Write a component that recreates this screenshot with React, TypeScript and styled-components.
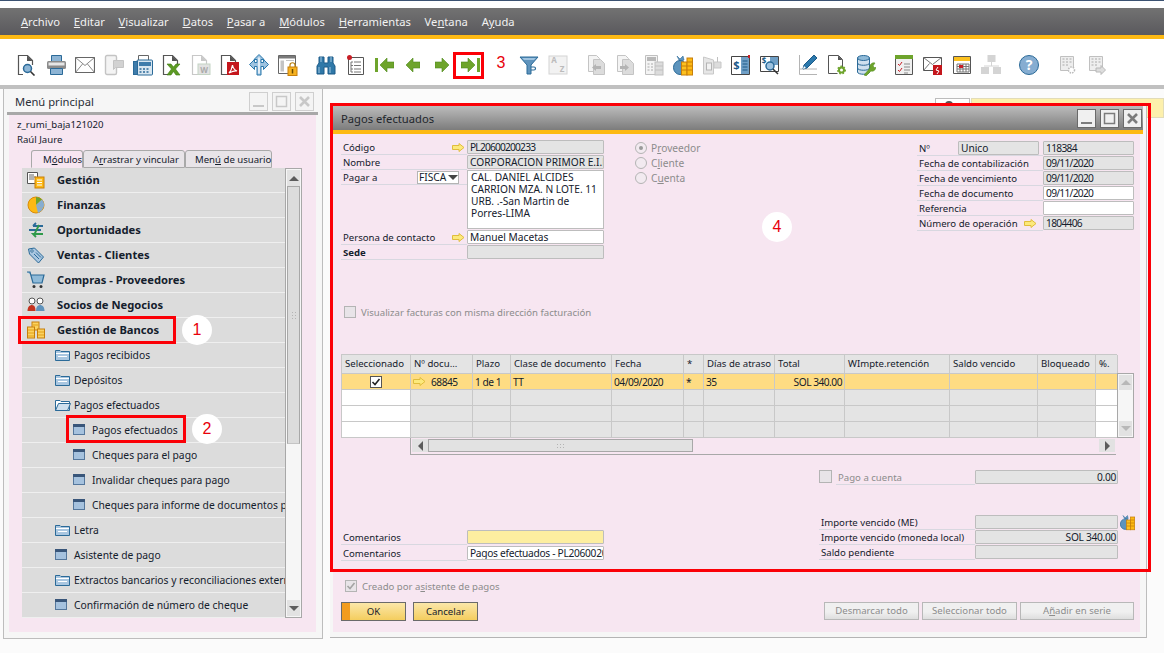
import * as React from "react"
import styled, { createGlobalStyle } from "styled-components"

const fontStack = `"Noto Sans", "DejaVu Sans", "Liberation Sans", sans-serif`

const GlobalStyle = createGlobalStyle`
  html, body { margin: 0; padding: 0; background: #fbfbfb; }
  body { font-family: ${fontStack}; font-size: 9.6px; color: #14202c; }
  * { box-sizing: border-box; }
  svg { display: block; }
`

const Page = styled.div`
  width: 1164px;
  height: 653px;
  display: flex;
  flex-direction: column;
  overflow: hidden;
  position: relative;
  background: #fff;
  border-top: 1px solid #3b5272;
`

const TopGap = styled.div`
  height: 7px;
  background: #fff;
`

const MenuBar = styled.div`
  height: 31px;
  padding-left: 14px;
  display: flex;
  align-items: center;
  background: linear-gradient(#727272, #5a595d);
  border-bottom: 4px solid #fdb913;
`

const MenuItem = styled.span`
  padding: 0 6.900px;
  color: #f2f2f2;
  font-size: 11.2px;
`

const Toolbar = styled.div`
  height: 46px;
  padding: 6px 0 0 12px;
  display: flex;
  gap: 9px;
  align-items: center;
  background: #fff;
`

const ToolGroup = styled.div`
  display: flex;
`

const ToolSlot = styled.div`
  width: 29px;
  height: 24px;
  display: flex;
  align-items: center;
  justify-content: center;
`

const ToolRule = styled.div`
  height: 4px;
  background: #c0c0c0;
`

const Desktop = styled.div`
  flex: 1;
  position: relative;
  background: #fbfbfb;
`

const Notice = styled.div`
  position: absolute;
  left: 971px;
  top: 9px;
  width: 193px;
  height: 20px;
  background: #fdf0ac;
  border: 1px solid #e2dcb8;
`

const NoticeTab = styled.div`
  position: absolute;
  left: 935px;
  top: 9px;
  width: 35px;
  height: 20px;
  padding: 2px 0 0 8px;
  background: #fff;
  border: 1px solid #bcbcbc;
`

const MainWindow = styled.section`
  position: absolute;
  left: 3px;
  top: 0;
  width: 320px;
  height: 550px;
  padding: 0 6px 6px 5px;
  display: flex;
  flex-direction: column;
  background: #f6f6f6;
  border: 1px solid #bdbdbd;
  border-top: 0;
`

const MainTitle = styled.div`
  height: 26px;
  margin: 0 -2px;
  padding: 2px 4px 0 8px;
  display: flex;
  align-items: center;
  justify-content: space-between;
  font-size: 11.200px;
  color: #2a2f38;
  border-bottom: 3px solid #a8a8a8;
`

const WindowButtons = styled.div`
  display: flex;
  gap: 4px;
`

const WindowButton = styled.div<{ $faded?: boolean }>`
  width: 19px;
  height: 19px;
  display: flex;
  align-items: center;
  justify-content: center;
  background: ${(p) => (p.$faded ? "#f4f4f4" : "#f0f0f0")};
  border: 1px solid ${(p) => (p.$faded ? "#cfcfcf" : "#6a6a6a")};
`

const MainBody = styled.div`
  flex: 1;
  padding: 2px 0 0 8px;
  display: flex;
  flex-direction: column;
  background: #f7e6f1;
`

const UserLine = styled.div`
  height: 15px;
  line-height: 15px;
`

const TabStrip = styled.div`
  margin: 3px 0 0 14px;
  height: 18px;
  display: flex;
`

const Tab = styled.div<{ $active?: boolean; $width: number }>`
  width: ${(p) => p.$width}px;
  padding-left: ${(p) => (p.$active ? 11 : 9)}px;
  line-height: 17px;
  white-space: nowrap;
  border: 1px solid #a9a9a9;
  border-radius: 3px 3px 0 0;
  background: ${(p) => (p.$active ? "#f7e6f1" : "#e8e4e8")};
  border-bottom-color: ${(p) => (p.$active ? "#f7e6f1" : "#a9a9a9")};
`

const ModuleArea = styled.div`
  margin-left: 5px;
  display: flex;
`

const ModuleList = styled.div`
  width: 263px;
  height: 450px;
  overflow: hidden;
`

const ModuleRow = styled.div<{ $indent: number; $strong?: boolean }>`
  height: 25px;
  padding: 0 0 1px ${(p) => p.$indent}px;
  display: flex;
  align-items: center;
  white-space: nowrap;
  background: #dcdcdc;
  border-bottom: 1px solid #efefef;
  font-weight: ${(p) => (p.$strong ? 700 : 400)};
  font-size: ${(p) => (p.$strong ? "11.200px" : "10.300px")};
`

const ModuleIcon = styled.span<{ $width: number }>`
  width: ${(p) => p.$width}px;
  flex: none;
`

const VerticalBar = styled.div<{ $height: number; $width: number }>`
  width: ${(p) => p.$width}px;
  height: ${(p) => p.$height}px;
  padding: 1px;
  display: flex;
  flex-direction: column;
  justify-content: space-between;
  flex: none;
  background: #f6f6f6;
  border: 1px solid #a8a8a8;
`

const ScrollTop = styled.div`
  display: flex;
  flex-direction: column;
`

const ScrollButton = styled.div<{ $height: number; $muted?: boolean }>`
  height: ${(p) => p.$height}px;
  flex: none;
  display: flex;
  align-items: center;
  justify-content: center;
  background: #e2e2e2;
  color: ${(p) => (p.$muted ? "#b8b8b8" : "#5c5c5c")};
`

const ScrollThumb = styled.div<{ $height: number }>`
  height: ${(p) => p.$height}px;
  flex: none;
  display: flex;
  align-items: center;
  justify-content: center;
  background: #dcdcdc;
  border: 1px solid #a8a8a8;
  border-bottom-color: #c4c4c4;
`

const FormWindow = styled.section`
  position: absolute;
  left: 330px;
  top: 15px;
  width: 817px;
  height: 534px;
  padding: 2px 6px 5px 3px;
  display: flex;
  flex-direction: column;
  background: #f6f6f6;
  border-right: 1px solid #bdbdbd;
  border-bottom: 1px solid #b4b4b4;
`

const FormTitle = styled.div`
  height: 28px;
  flex: none;
  padding: 0 1px 0 8px;
  margin-right: -3px;
  display: flex;
  align-items: center;
  justify-content: space-between;
  font-size: 11.200px;
  color: #22262c;
  background: linear-gradient(#bcbcbc, #7c7c7c);
  border-bottom: 4px solid #fdb913;
`

const FormBody = styled.div`
  flex: 1;
  padding: 6px 0 0 8px;
  display: flex;
  flex-direction: column;
  background: #f7e6f1;
`

const HeaderGrid = styled.div`
  height: 214px;
  display: grid;
  grid-template-columns: 263px 31px 282px 217px;
  grid-template-rows: 160px 54px;
`

const FieldStack = styled.div`
  display: flex;
  flex-direction: column;
`

const RadioStack = styled.div`
  grid-column: 3;
  display: flex;
  flex-direction: column;
`

const RightStack = styled.div`
  grid-column: 4;
  padding-top: 1px;
  display: flex;
  flex-direction: column;
`

const FieldRow = styled.div<{ $label: number; $value: number }>`
  height: 15px;
  display: grid;
  grid-template-columns: ${(p) => p.$label}px ${(p) => p.$value}px;
  flex: none;
`

const FieldLabel = styled.div<{ $strong?: boolean; $faded?: boolean }>`
  height: 15px;
  padding: 1px 2px 0;
  display: flex;
  align-items: center;
  justify-content: space-between;
  white-space: nowrap;
  border-bottom: 1px solid #d8d8e0;
  font-weight: ${(p) => (p.$strong ? 700 : 400)};
  color: ${(p) => (p.$faded ? "#8c8c8c" : "inherit")};
`

const FieldValue = styled.div<{ $tone?: "locked" | "open" | "note"; $right?: boolean; $squeeze?: number }>`
  height: 14px;
  padding: 0 1px 0 2px;
  line-height: 13px;
  font-size: 10.200px;
  letter-spacing: ${(p) => p.$squeeze ?? 0}px;
  overflow: hidden;
  white-space: nowrap;
  text-align: ${(p) => (p.$right ? "right" : "left")};
  background: ${(p) => (p.$tone === "open" ? "#fff" : p.$tone === "note" ? "#fdeea0" : "#e4e4e4")};
  border: 1px solid #bdbdbd;
  border-radius: 1px;
`

const PickBox = styled.div`
  width: 42px;
  height: 13px;
  margin-right: 6px;
  padding-left: 1px;
  display: flex;
  align-items: center;
  justify-content: space-between;
  overflow: hidden;
  background: #fff;
  border: 1px solid #b4b4b4;
  line-height: 11px;
  font-size: 10.200px;
`

const AddressRow = styled.div`
  height: 60px;
  display: grid;
  grid-template-columns: 126px 137px;
  align-items: start;
  flex: none;
`

const AddressBox = styled.div`
  height: 59px;
  padding: 0 3px;
  line-height: 12px;
  font-size: 10.200px;
  background: #fff;
  border: 1px solid #bdbdbd;
`

const RadioLine = styled.div`
  height: 15px;
  display: flex;
  align-items: center;
  gap: 4px;
  font-size: 10.200px;
  color: #8c8c8c;
`

const RadioDot = styled.span<{ $on?: boolean }>`
  width: 12px;
  height: 12px;
  display: flex;
  align-items: center;
  justify-content: center;
  border-radius: 50%;
  background: #f2eaf0;
  border: 1px solid #b4b4b4;

  &::after {
    content: "";
    width: 4px;
    height: 4px;
    border-radius: 50%;
    background: ${(p) => (p.$on ? "#9a9a9a" : "transparent")};
  }
`

const CheckLine = styled.div<{ $gap: number }>`
  display: flex;
  align-items: center;
  gap: ${(p) => p.$gap}px;
  color: #8c8c8c;
  white-space: nowrap;
`

const CheckBox = styled.span<{ $live?: boolean; $size: number }>`
  width: ${(p) => p.$size}px;
  height: ${(p) => p.$size}px;
  flex: none;
  display: flex;
  align-items: center;
  justify-content: center;
  background: ${(p) => (p.$live ? "#fff" : "#e8e4e8")};
  border: 1px solid ${(p) => (p.$live ? "#555" : "#b4b4b4")};
`

const VisualizarLine = styled(CheckLine)`
  grid-column: 1 / span 4;
  padding-left: 3px;
  align-self: start;
  height: 12px;
  margin-top: 6px;
`

const TableArea = styled.div`
  display: flex;
`

const Table = styled.div`
  width: 776px;
  display: grid;
  grid-template-columns: 69px 62px 38px 101px 72px 20px 71px 70px 105px 88px 58px 22px;
  grid-template-rows: 19px repeat(4, 16px);
  flex: none;
  border-left: 1px solid #c8c8c8;
  border-top: 1px solid #c8c8c8;
`

const HeadCell = styled.div`
  padding: 0 3px;
  line-height: 17px;
  white-space: nowrap;
  overflow: hidden;
  background: #e4e4e4;
  border-right: 1px solid #c8c8c8;
  border-bottom: 1px solid #c8c8c8;
`

const BodyCell = styled.div<{ $tone: "pick" | "free" | "idle"; $align?: string }>`
  padding: 0 2px;
  display: flex;
  align-items: center;
  gap: 5px;
  justify-content: ${(p) => p.$align ?? "flex-start"};
  font-size: 10.200px;
  letter-spacing: -0.500px;
  white-space: nowrap;
  overflow: hidden;
  background: ${(p) => (p.$tone === "pick" ? "#fedc83" : p.$tone === "free" ? "#fff" : "#e4e4e4")};
  border-right: 1px solid #c8c8c8;
  border-bottom: 1px solid #c8c8c8;
`

const TableVertical = styled.div`
  margin-top: 19px;
`

const HorizontalBar = styled.div`
  width: 706px;
  height: 17px;
  margin-left: 69px;
  padding: 1px 1px 2px 1px;
  display: flex;
  justify-content: space-between;
  border-left: 1px solid #a8a8a8;
  border-bottom: 1px solid #a8a8a8;
`

const SideButton = styled.div`
  width: 16px;
  display: flex;
  align-items: center;
  justify-content: center;
  background: #e2e2e2;
`

const SideThumb = styled.div`
  width: 265px;
  margin-right: auto;
  display: flex;
  align-items: center;
  justify-content: center;
  background: #e2e2e2;
  border: 1px solid #a8a8a8;
`

const LowerArea = styled.div`
  height: 106px;
  display: grid;
  grid-template-columns: 478px 315px;
  align-items: end;
`

const RightLower = styled.div`
  padding-bottom: 1px;
  display: flex;
  flex-direction: column;
`

const PayLine = styled.div`
  height: 15px;
  margin-bottom: 30px;
  display: grid;
  grid-template-columns: 17px 139px 143px;
  align-items: start;
`

const ImportRow = styled.div`
  height: 15px;
  display: grid;
  grid-template-columns: 156px 143px auto;
`

const CoinSlot = styled.div`
  margin: -1px 0 0 2px;
`

const CommentsStack = styled.div`
  display: flex;
  flex-direction: column;
  gap: 1px;
`

const FootCheck = styled(CheckLine)`
  margin: 19px 0 0 4px;
  height: 12px;
`

const ButtonRow = styled.div`
  margin-top: 10px;
  width: 793px;
  display: flex;
  gap: 3px;
`

const PrimaryButton = styled.div<{ $lead?: boolean }>`
  width: 65px;
  height: 19px;
  margin-right: 4px;
  line-height: 17px;
  text-align: center;
  border: 1px solid #6a6a6a;
  background: ${(p) =>
    p.$lead
      ? "linear-gradient(90deg, #f39c1f 8px, transparent 8px), linear-gradient(#fbe7a9, #f4cd5e)"
      : "linear-gradient(#fbe7a9, #f4cd5e)"};
`

const MutedButton = styled.div<{ $width: number; $first?: boolean }>`
  width: ${(p) => p.$width}px;
  height: 18px;
  margin-left: ${(p) => (p.$first ? "auto" : "0")};
  line-height: 16px;
  text-align: center;
  color: #8c8c8c;
  background: linear-gradient(#f0f0f0 55%, #dedede);
  border: 1px solid #b8b8b8;
`

const ArrowSlot = styled.span`
  margin-right: 4px;
`

const UnicoBox = styled(FieldValue)`
  width: 81px;
  margin: -1px 2px 0 0;
`

const RedFrame = styled.div<{ $x: number; $y: number; $w: number; $h: number }>`
  position: absolute;
  left: ${(p) => p.$x}px;
  top: ${(p) => p.$y}px;
  width: ${(p) => p.$w}px;
  height: ${(p) => p.$h}px;
  border: 3px solid #fb0007;
  pointer-events: none;
`

const StepBadge = styled.div<{ $x: number; $y: number }>`
  position: absolute;
  left: ${(p) => p.$x - 15}px;
  top: ${(p) => p.$y - 15}px;
  width: 30px;
  height: 30px;
  display: flex;
  align-items: center;
  justify-content: center;
  border-radius: 50%;
  background: #fff;
  color: #e8000a;
  font-family: "Liberation Sans", sans-serif;
  font-size: 16px;
`

/* ---- drawings ---- */

const Ico = ({ w = 20, h = 22, children }: { w?: number; h?: number; children: React.ReactNode }) => (
  <svg width={w} height={h} viewBox={`0 0 ${w} ${h}`}>{children}</svg>
)

const GreyDoc = ({ flip }: { flip?: boolean }) => (
  <Ico>
    <path d="M2.500 1.500h8l3 3v13h-11z" fill="#f4f4f4" stroke="#c4c4c4" />
    <path d="M7.500 5.500h7l4 4v11h-11z" fill="#dcdcdc" stroke="#c4c4c4" />
    <path d={flip ? "M5 12h5v-2l4 3.500-4 3.500v-2h-5z" : "M15 12h-5v-2l-4 3.500 4 3.500v-2h5z"} fill="#b4b4b4" />
  </Ico>
)

const GreenArrow = ({ left, x = 0 }: { left?: boolean; x?: number }) => (
  <g transform={`translate(${x} 4)`}>
    <path
      d={left ? "M0 7l7-7v4h7v6h-7v4z" : "M14 7l-7-7v4h-7v6h7v4z"}
      fill="#6ea42c"
      stroke="#4f8a1e"
      strokeWidth=".6"
    />
  </g>
)

const CoinBag = ({ scale = 1 }: { scale?: number }) => (
  <svg width={20 * scale} height={22 * scale} viewBox="0 0 20 22">
    <path d="M4 2l3 3 3-3 1 4c-1 1-4 1-5 0z" fill="#5d94bd" stroke="#2b6a98" strokeWidth=".6" />
    <ellipse cx="7" cy="13.500" rx="6.500" ry="7" fill="#5d94bd" stroke="#2b6a98" />
    <rect x="8.500" y="8" width="5.500" height="13" fill="#fcc11f" stroke="#c77f0a" />
    <rect x="14" y="4" width="5.500" height="17" fill="#fdb913" stroke="#c77f0a" />
    <path d="M9 12h5M9 16h5M14 8h5M14 12h5M14 16h5" stroke="#c77f0a" />
  </svg>
)

const GridSheet = () => (
  <g>
    <path d="M3.500 2.500h13v14h-13z" fill="#eee" stroke="#c0c0c0" />
    <path d="M5.500 5h2M9 5h2M12.500 5h2M5.500 8h2M9 8h2M12.500 8h2M5.500 11h2M9 11h2" stroke="#aaa" />
  </g>
)

const toolGroups: React.ReactNode[][] = [
  [
    <Ico key="preview"><path d="M6 20.500H1.500v-19h9l5 5V11" fill="#fff" stroke="#555" strokeWidth="1.200" /><path d="M10 1.500v5.500h5.500z" fill="#555" /><circle cx="10.500" cy="14.500" r="4" fill="#8eb6d6" stroke="#2b6a98" strokeWidth="1.500" /><path d="M13.500 17.500l4 4" stroke="#333" strokeWidth="1.600" /></Ico>,
    <Ico key="print"><path d="M5.500 1.500h10v6h-10z" fill="#8db4d4" stroke="#2b6a98" /><rect x="1" y="7" width="19" height="8" rx="1.500" fill="#8b8b8b" /><rect x="2.500" y="8.500" width="16" height="3" fill="#e6e6e6" /><path d="M4.500 14.500h12v6h-12z" fill="#8db4d4" stroke="#2b6a98" /></Ico>,
    <Ico key="mail"><path d="M.5 3.500h19v15h-19z" fill="#fff" stroke="#666" strokeWidth="1.200" /><path d="M.5 3.500l9.500 8 9.500-8M.5 18.500l7-8.500M19.500 18.500l-7-8.500" fill="none" stroke="#888" /></Ico>,
    <Ico key="phone"><rect x="1.500" y="1.500" width="11" height="19" rx="1.500" fill="#f4f4f4" stroke="#c4c4c4" strokeWidth="1.400" /><path d="M9.500 6.500h10v7h-8l-2 2z" fill="#d2d2d2" stroke="#c4c4c4" /></Ico>,
    <Ico key="fax"><path d="M5.500 1.500h10v5h-10z" fill="#fff" stroke="#666" /><rect x="4" y="6" width="15.500" height="15" rx="1" fill="#d8e6f0" stroke="#2b6a98" /><rect x="0.500" y="7.500" width="4" height="13" fill="#3f7cab" stroke="#2b6a98" /><rect x="6" y="8" width="12" height="4" fill="#3f7cab" /><path d="M6.500 15h2M10 15h2M13.500 15h2M6.500 18h2M10 18h2M13.500 18h2" stroke="#2b6a98" strokeWidth="1.400" /></Ico>,
    <Ico key="excel"><path d="M7 20.500H1.500v-19h9l5 5V10" fill="#fff" stroke="#555" strokeWidth="1.200" /><path d="M10 1.500v5.500h5.500z" fill="#555" /><path d="M5 10h4l2.500 3 2.500-3h4l-4.500 5 4.500 6h-4l-2.500-3.500-2.500 3.500H5l4.500-6z" fill="#5c9a23" stroke="#3d7a12" strokeWidth=".6" /></Ico>,
    <Ico key="word"><path d="M7 20.500H1.500v-19h9l5 5V10" fill="#fff" stroke="#c8c8c8" strokeWidth="1.200" /><path d="M10 1.500v5.500h5.500z" fill="#c8c8c8" /><rect x="7" y="10" width="12" height="10.500" fill="#e2e2e2" stroke="#c4d4c4" /><text x="13" y="18.500" fontSize="8" fontWeight="700" textAnchor="middle" fill="#aaa">W</text></Ico>,
    <Ico key="pdf"><path d="M7 20.500H1.500v-19h9l5 5V10" fill="#fff" stroke="#555" strokeWidth="1.200" /><path d="M10 1.500v5.500h5.500z" fill="#555" /><rect x="7" y="8" width="12" height="13" fill="#c4161c" /><path d="M9 19c2-2 3-5 3.500-8 .5 3 2 5 4.500 6-3-.5-5 .5-8 2z" fill="none" stroke="#fff" strokeWidth="1.200" /></Ico>,
    <Ico key="arrows"><path d="M10 .5l5 5h-3v3h2.500V5.500l5 5-5 5v-3H12v8.500H8V12.500H5.500v3l-5-5 5-5v3H8v-3H5z" fill="#9ec3e0" stroke="#2b78ac" /><path d="M10 3.500v16" stroke="#fff" strokeWidth="1.400" /></Ico>,
    <Ico key="lock"><path d="M.5 1.500h17v18H.5z" fill="#fff" stroke="#666" /><path d="M1 2h16v2.500H1z" fill="#7a7a7a" /><path d="M2.500 6.500h3.500v11H2.500z" fill="#c4c4c4" /><path d="M8 6.500h8" stroke="#c4c4c4" /><rect x="10" y="13" width="9" height="8.500" fill="#f6b220" stroke="#c77f0a" /><path d="M12 13v-2c0-3 5-3 5 0v2" fill="none" stroke="#b98010" strokeWidth="1.200" /><path d="M14.500 15v4.500" stroke="#6a4a00" strokeWidth="1.500" /></Ico>,
  ],
  [
    <Ico key="bino"><path d="M3 3h5v6h4V3h5v6l2 3v8h-7v-7H8v7H1v-8l2-3z" fill="#2f78a8" stroke="#1c5a88" /><path d="M5 3v5M15 3v5M3 13v6M14 13v6" stroke="#8fbad8" strokeWidth="1.200" /></Ico>,
    <Ico key="listdoc" w={18}><path d="M2.500 3.500h15v17h-15z" fill="#fff" stroke="#555" /><circle cx="3.500" cy="3.500" r="2.500" fill="#c81e26" /><path d="M5 8v10M5 8h2M5 11.500h2M5 15h2M5 18h2M8 8h7M8 11.500h7M8 15h7M8 18h7" stroke="#777" /></Ico>,
    <Ico key="first"><rect x="1" y="4" width="3" height="14" fill="#6ea42c" /><GreenArrow left x={6} /></Ico>,
    <Ico key="prev" w={14}><GreenArrow left x={0} /></Ico>,
    <Ico key="next" w={14}><GreenArrow x={0} /></Ico>,
    <Ico key="last"><GreenArrow x={0} /><rect x="16" y="4" width="3" height="14" fill="#6ea42c" /></Ico>,
    <span key="blank" />,
    <Ico key="filter"><path d="M1 3h18l-7 8v9h-4v-9z" fill="#5f93bc" stroke="#2b6a98" /><path d="M3 4h14l-2 2H5z" fill="#9ec3e0" /><path d="M12 13h3c2 0 2 3 0 3h-3" fill="none" stroke="#2b6a98" strokeWidth="1.200" /></Ico>,
    <Ico key="sort"><rect x="1" y="2" width="18" height="18" fill="#f2f2f2" stroke="#d4d4d4" /><text x="6" y="9" fontSize="8" fontWeight="700" textAnchor="middle" fill="#bbb">A</text><text x="14" y="18" fontSize="8" fontWeight="700" textAnchor="middle" fill="#bbb">Z</text></Ico>,
  ],
  [
    <GreyDoc key="docback" />,
    <GreyDoc key="docfwd" flip />,
    <Ico key="calc"><path d="M1.500 1.500h12v19h-12z" fill="#f4f4f4" stroke="#c0c0c0" /><rect x="3" y="3" width="9" height="4" fill="#b8b8b8" /><path d="M3.500 10h2M7 10h2M3.500 13h2M7 13h2M3.500 16h2M7 16h2" stroke="#aaa" /><rect x="11" y="8" width="8" height="13" fill="#dcdcdc" stroke="#c0c0c0" /><path d="M11 12h8M11 16h8" stroke="#c0c0c0" /></Ico>,
    <CoinBag key="bag" />,
    <Ico key="scale"><path d="M1.500 3l10 3v14h-10z" fill="#e6e6e6" stroke="#c8c8c8" /><rect x="4.500" y="9" width="5" height="7" fill="#f2f2f2" stroke="#b4b4b4" /><path d="M12 8h7v6h-7z" fill="#dcdcdc" stroke="#c8c8c8" /><path d="M15.500 3v5" stroke="#c0c0c0" /></Ico>,
    <Ico key="dollar"><path d="M.5 2.500h18v18H.5z" fill="#fff" stroke="#444" /><rect x="10" y="3" width="8" height="17" fill="#6f9fc6" /><path d="M11.500 7h5M11.500 10h5M11.500 13h5M11.500 16h5" stroke="#1c5a88" /><text x="5.500" y="15" fontSize="11" fontWeight="700" textAnchor="middle" fill="#1c5a88">$</text><rect x="17" y="1" width="2" height="3" fill="#c81e26" /></Ico>,
    <Ico key="dollarzoom"><path d="M.5 2.500h18v15H.5z" fill="#fff" stroke="#444" /><rect x="10" y="3" width="8" height="8" fill="#6f9fc6" /><text x="4" y="10" fontSize="8" fontWeight="700" textAnchor="middle" fill="#1c5a88">$</text><circle cx="10" cy="12" r="4" fill="#9ec3e0" stroke="#2b6a98" strokeWidth="1.500" /><path d="M13 15l5 5" stroke="#333" strokeWidth="1.500" /></Ico>,
  ],
  [
    <Ico key="pencil"><path d="M1.500 1v19.500H19M1.500 15H19" fill="none" stroke="#b4b4b4" /><path d="M5 15l1-4 10-10 3 3-10 10z" fill="#2b78ac" stroke="#1c5a88" /><path d="M5 15l1-3 2 2z" fill="#fff" /></Ico>,
    <Ico key="docgear"><path d="M1.500 1.500h10l4 4v10" fill="#fff" stroke="#555" /><path d="M1.500 1.500v18h9" fill="none" stroke="#555" /><path d="M11 1.500v4.500h4.500z" fill="#555" /><circle cx="14.500" cy="16" r="3.500" fill="#6ea42c" stroke="#6ea42c" strokeWidth="2" strokeDasharray="1.500 1.500" /><circle cx="14.500" cy="16" r="1.500" fill="#fff" /></Ico>,
    <Ico key="dbtool"><path d="M1.500 4v14c0 3 12 3 12 0V4z" fill="#cfe0ee" stroke="#2b6a98" /><ellipse cx="7.500" cy="4" rx="6" ry="2.500" fill="#8fbad8" stroke="#2b6a98" /><path d="M1.500 9c0 3 12 3 12 0M1.500 14c0 3 12 3 12 0" fill="none" stroke="#2b6a98" /><path d="M8 21l6-7c-1-3 2-6 5-5l-2 3 2 2 1-1c0 3-3 5-5 4l-5 5z" fill="#6ea42c" stroke="#4f8a1e" strokeWidth=".5" /></Ico>,
  ],
  [
    <Ico key="tasks"><path d="M1.500 2.500h17v18h-17z" fill="#f0f0f0" stroke="#555" /><rect x="1" y="1" width="18" height="4" fill="#6ea42c" /><path d="M4 10l1.500 1.500L8 8M4 16l1.500 1.500L8 14" fill="none" stroke="#c81e26" /><path d="M10 10h6M10 13h6M10 16h6M10 19h4" stroke="#888" /></Ico>,
    <Ico key="mailred"><path d="M.5 3.500h18v13h-18z" fill="#fff" stroke="#555" /><path d="M.5 3.500l9 7 9-7M.5 16.500l6-7" fill="none" stroke="#777" /><rect x="10" y="11" width="9" height="10" fill="#c4161c" /><path d="M15 13l-2 3 3 1-2 3" fill="none" stroke="#fff" /></Ico>,
    <Ico key="calendar"><path d="M1.500 2.500h17v17h-17z" fill="#fff" stroke="#555" /><rect x="2" y="3" width="16" height="4" fill="#fcc11f" /><path d="M5 10h12v8H5zM8 10v8M11 10v8M14 10v8M5 12.500h12M5 15h12" fill="none" stroke="#777" /><rect x="7" y="11" width="4" height="3" fill="#c81e26" /></Ico>,
    <Ico key="org"><rect x="6.500" y="1" width="8" height="7" fill="#d4d4d4" /><path d="M10.500 8v4M3 12h15" stroke="#d4d4d4" /><rect x="0" y="13" width="8" height="7" fill="#d4d4d4" /><rect x="12" y="13" width="8" height="7" fill="#d4d4d4" /></Ico>,
  ],
  [
    <Ico key="help" w={22}><circle cx="11" cy="11" r="9.500" fill="#86add1" stroke="#2b6a98" /><text x="11" y="16" fontSize="14" fontWeight="700" textAnchor="middle" fill="#fff">?</text></Ico>,
  ],
  [
    <Ico key="sheetgear"><GridSheet /><circle cx="14.500" cy="16" r="3" fill="#fff" stroke="#bbb" strokeWidth="1.500" strokeDasharray="1.500 1" /></Ico>,
    <Ico key="sheetarrow"><GridSheet /><path d="M10 14h5v-2.500l4.500 4.500-4.500 4.500V18h-5z" fill="#ddd" stroke="#b8b8b8" /></Ico>,
  ],
]

const FolderIcon = ({ open }: { open?: boolean }) => (
  <Ico w={16} h={14}>
    <path d="M.5 2.500v10h14v-9H6l-1-1z" fill={open ? "#fff" : "#a9c6e0"} stroke="#2b6a98" />
    {open ? <path d="M.5 12.500l3-7h12l-3 7z" fill="#cfe0ee" stroke="#2b6a98" /> : <path d="M1 5.500h13M3 8.500h9" stroke="#fff" />}
  </Ico>
)

const ScreenIcon = () => (
  <Ico w={12} h={11}>
    <rect x=".5" y=".5" width="11" height="10" fill="#a6c2de" stroke="#55779c" />
    <rect x="0" y="0" width="12" height="3" fill="#39567a" />
  </Ico>
)

const moduleIcons: Record<string, React.ReactNode> = {
  gestion: <Ico w={18} h={18}><path d="M.5 1.500h10v11H.5z" fill="#fff" stroke="#555" /><path d="M2 4h5M2 6h7M2 8h5" stroke="#666" /><rect x="8" y="6" width="9" height="11" fill="#fdb913" stroke="#c77f0a" /><path d="M10 9h5M10 11.500h5M10 14h5" stroke="#fff" /></Ico>,
  finanzas: <Ico w={18} h={18}><circle cx="9" cy="9" r="8" fill="#fdb913" stroke="#d98b08" /><path d="M9 9V1a8 8 0 0 1 6 2.500z" fill="#6ea42c" /><path d="M9 9l6-5.500a8 8 0 0 1 1 9z" fill="#86add1" /><path d="M9 9l7 3.500a8 8 0 0 1-5 4.500z" fill="#86add1" /></Ico>,
  oportunidades: <Ico w={18} h={18}><path d="M16 5H6M6 5l3-3M2 9h12" fill="none" stroke="#2b6a98" strokeWidth="1.800" /><path d="M16 13H6l3 3M7 14l5-10" fill="none" stroke="#2f9a4a" strokeWidth="1.800" /></Ico>,
  ventas: <Ico w={18} h={18}><path d="M1.500 3l6-1 9 9-5 6-9-9z" fill="#a9c6e0" stroke="#2b6a98" /><circle cx="5" cy="5" r="1.200" fill="#fff" stroke="#2b6a98" /><path d="M7 8l5 5M9 6.500l5 5" stroke="#2b6a98" /></Ico>,
  compras: <Ico w={18} h={18}><path d="M0 1h3l3 11h9l2-8H4" fill="#8fbad8" stroke="#2b6a98" strokeWidth="1.200" /><circle cx="7" cy="15.500" r="1.500" fill="#333" /><circle cx="14" cy="15.500" r="1.500" fill="#333" /></Ico>,
  socios: <Ico w={18} h={18}><circle cx="5" cy="5" r="3" fill="#fff" stroke="#555" /><circle cx="13" cy="5" r="3" fill="#fff" stroke="#555" /><path d="M.5 15c0-4 2-6 4.500-6s3.500 2 3.500 6z" fill="#c4331f" /><path d="M9 15c0-4 1.500-6 4-6s4.500 2 4.500 6z" fill="#5f93bc" /></Ico>,
  bancos: <Ico w={18} h={18}><rect x="5" y="1" width="7" height="8" fill="#fbd25f" stroke="#c77f0a" /><rect x=".5" y="6" width="7" height="11" fill="#fbd25f" stroke="#c77f0a" /><rect x="10.500" y="8" width="7" height="9" fill="#fbd25f" stroke="#c77f0a" /><path d="M1 9h6M1 12h6M1 15h6M11 11h6M11 14h6M6 4h5" stroke="#e3a018" /></Ico>,
}

const GripDots = ({ wide }: { wide?: boolean }) => (
  <Ico w={wide ? 9 : 6} h={wide ? 6 : 9}>
    {(wide ? [1, 4, 7] : [1, 4]).flatMap((x) =>
      (wide ? [1, 4] : [1, 4, 7]).map((y) => <rect key={`${x}-${y}`} x={x} y={y} width="1" height="1" fill="#b4b4b4" />),
    )}
  </Ico>
)

const Triangle = ({ dir, c = "currentColor" }: { dir: "up" | "down" | "left" | "right"; c?: string }) => {
  const d = { up: "M0 6l5-5 5 5z", down: "M0 1h10l-5 5z", left: "M7 0v10l-5-5z", right: "M2 0v10l5-5z" }[dir]
  const horizontal = dir === "up" || dir === "down"
  return (
    <Ico w={horizontal ? 10 : 8} h={horizontal ? 7 : 10}>
      <path d={d} fill={c} />
    </Ico>
  )
}

const ArrowLink = () => (
  <Ico w={13} h={9}>
    <path d="M.5 2.500h6.500V.5l5 4-5 4v-2H.500z" fill="#fce97c" stroke="#e0bd3c" />
  </Ico>
)

const WindowGlyph = ({ kind, c }: { kind: "min" | "max" | "close"; c: string }) => (
  <Ico w={13} h={13}>
    {kind === "min" && <path d="M1 11h11" stroke={c} strokeWidth="2" />}
    {kind === "max" && <path d="M1.500 1.500h10v10h-10z" fill="none" stroke={c} strokeWidth="1.500" />}
    {kind === "close" && <path d="M2 2l9 9M11 2l-9 9" stroke={c} strokeWidth="2.600" />}
  </Ico>
)

const Controls = ({ faded }: { faded?: boolean }) => (
  <WindowButtons>
    {(["min", "max", "close"] as const).map((k) => (
      <WindowButton key={k} $faded={faded}>
        <WindowGlyph kind={k} c={faded ? "#c8c8c8" : "#7c7c7c"} />
      </WindowButton>
    ))}
  </WindowButtons>
)

const modules = [
  { label: "Gestión", icon: "gestion" },
  { label: "Finanzas", icon: "finanzas" },
  { label: "Oportunidades", icon: "oportunidades" },
  { label: "Ventas - Clientes", icon: "ventas" },
  { label: "Compras - Proveedores", icon: "compras" },
  { label: "Socios de Negocios", icon: "socios" },
  { label: "Gestión de Bancos", icon: "bancos" },
]

const subItems: { label: string; kind: "folder" | "open" | "screen"; depth: number }[] = [
  { label: "Pagos recibidos", kind: "folder", depth: 1 },
  { label: "Depósitos", kind: "folder", depth: 1 },
  { label: "Pagos efectuados", kind: "open", depth: 1 },
  { label: "Pagos efectuados", kind: "screen", depth: 2 },
  { label: "Cheques para el pago", kind: "screen", depth: 2 },
  { label: "Invalidar cheques para pago", kind: "screen", depth: 2 },
  { label: "Cheques para informe de documentos pagados", kind: "screen", depth: 2 },
  { label: "Letra", kind: "folder", depth: 1 },
  { label: "Asistente de pago", kind: "screen", depth: 1 },
  { label: "Extractos bancarios y reconciliaciones externas", kind: "folder", depth: 1 },
  { label: "Confirmación de número de cheque", kind: "screen", depth: 1 },
]

const columns = ["Seleccionado", "Nº docu...", "Plazo", "Clase de documento", "Fecha", "*", "Días de atraso", "Total", "WImpte.retención", "Saldo vencido", "Bloqueado", "%."]

const Field = ({ label, value, tone, strong, arrow, squeeze }: { label: string; value?: string; tone?: "locked" | "open" | "note"; strong?: boolean; arrow?: boolean; squeeze?: number }) => (
  <FieldRow $label={126} $value={137}>
    <FieldLabel $strong={strong}>
      {label}
      {arrow && <ArrowLink />}
    </FieldLabel>
    <FieldValue $tone={tone} $squeeze={squeeze}>{value}</FieldValue>
  </FieldRow>
)

const DateField = ({ label, value, tone, arrow }: { label: string; value?: string; tone?: "locked" | "open"; arrow?: boolean }) => (
  <FieldRow $label={126} $value={91}>
    <FieldLabel>
      {label}
      {arrow && <ArrowSlot><ArrowLink /></ArrowSlot>}
    </FieldLabel>
    <FieldValue $tone={tone} $squeeze={-0.7}>{value}</FieldValue>
  </FieldRow>
)

const Amount = ({ label, value, coin }: { label: string; value?: string; coin?: boolean }) => (
  <ImportRow>
    <FieldLabel>{label}</FieldLabel>
    <FieldValue $right $squeeze={-0.3}>{value}</FieldValue>
    {coin && (
      <CoinSlot>
        <CoinBag scale={0.75} />
      </CoinSlot>
    )}
  </ImportRow>
)

const CheckMark = ({ c, size }: { c: string; size: number }) => (
  <svg width={size} height={size} viewBox="0 0 10 10">
    <path d="M1.500 5l2.500 2.500L8.500 2" fill="none" stroke={c} strokeWidth="1.600" />
  </svg>
)

export default function App() {
  return (
    <Page>
      <GlobalStyle />
      <TopGap />
      <MenuBar>
        <MenuItem><u>A</u>rchivo</MenuItem>
        <MenuItem><u>E</u>ditar</MenuItem>
        <MenuItem><u>V</u>isualizar</MenuItem>
        <MenuItem><u>D</u>atos</MenuItem>
        <MenuItem><u>P</u>asar a</MenuItem>
        <MenuItem><u>M</u>ódulos</MenuItem>
        <MenuItem><u>H</u>erramientas</MenuItem>
        <MenuItem>Ve<u>n</u>tana</MenuItem>
        <MenuItem>A<u>y</u>uda</MenuItem>
      </MenuBar>
      <Toolbar>
        {toolGroups.map((group, i) => (
          <ToolGroup key={i}>
            {group.map((icon, j) => (
              <ToolSlot key={j}>{icon}</ToolSlot>
            ))}
          </ToolGroup>
        ))}
      </Toolbar>
      <ToolRule />
      <Desktop>
        <NoticeTab>
          <Ico w={10} h={8}><circle cx="5" cy="4" r="4" fill="#555" /></Ico>
        </NoticeTab>
        <Notice />
        <MainWindow>
          <MainTitle>
            Menú principal
            <Controls faded />
          </MainTitle>
          <MainBody>
            <UserLine>z_rumi_baja121020</UserLine>
            <UserLine>Raúl Jaure</UserLine>
            <TabStrip>
              <Tab $active $width={52}>M<u>ó</u>dulos</Tab>
              <Tab $width={102}>A<u>r</u>rastrar y vincular</Tab>
              <Tab $width={87}>Men<u>ú</u> de usuario</Tab>
            </TabStrip>
            <ModuleArea>
              <ModuleList>
                {modules.map((m) => (
                  <ModuleRow key={m.label} $indent={5} $strong>
                    <ModuleIcon $width={30}>{moduleIcons[m.icon]}</ModuleIcon>
                    {m.label}
                  </ModuleRow>
                ))}
                {subItems.map((s, i) => (
                  <ModuleRow key={i} $indent={s.depth === 1 ? 33 : 51}>
                    <ModuleIcon $width={19}>
                      {s.kind === "screen" ? <ScreenIcon /> : <FolderIcon open={s.kind === "open"} />}
                    </ModuleIcon>
                    {s.label}
                  </ModuleRow>
                ))}
              </ModuleList>
              <VerticalBar $height={450} $width={17}>
                <ScrollTop>
                  <ScrollButton $height={16}><Triangle dir="up" /></ScrollButton>
                  <ScrollThumb $height={258}><GripDots /></ScrollThumb>
                </ScrollTop>
                <ScrollButton $height={16}><Triangle dir="down" /></ScrollButton>
              </VerticalBar>
            </ModuleArea>
          </MainBody>
        </MainWindow>

        <FormWindow>
          <FormTitle>
            Pagos efectuados
            <Controls />
          </FormTitle>
          <FormBody>
            <HeaderGrid>
              <FieldStack>
                <Field label="Código" value="PL20600200233" arrow squeeze={-0.8} />
                <Field label="Nombre" value="CORPORACION PRIMOR E.I.R.L." />
                <AddressRow>
                  <FieldLabel>
                    Pagar a
                    <PickBox>FISCA<Triangle dir="down" c="#444" /></PickBox>
                  </FieldLabel>
                  <AddressBox>CAL. DANIEL ALCIDES CARRION MZA. N LOTE. 11 URB. .-San Martin de Porres-LIMA</AddressBox>
                </AddressRow>
                <Field label="Persona de contacto" value="Manuel Macetas" tone="open" arrow />
                <Field label="Sede" strong />
              </FieldStack>
              <RadioStack>
                <RadioLine><RadioDot $on /><span>P<u>r</u>oveedor</span></RadioLine>
                <RadioLine><RadioDot /><span>C<u>l</u>iente</span></RadioLine>
                <RadioLine><RadioDot /><span>C<u>u</u>enta</span></RadioLine>
              </RadioStack>
              <RightStack>
                <FieldRow $label={126} $value={91}>
                  <FieldLabel>
                    Nº
                    <UnicoBox>Unico</UnicoBox>
                  </FieldLabel>
                  <FieldValue $squeeze={-0.7}>118384</FieldValue>
                </FieldRow>
                <DateField label="Fecha de contabilización" value="09/11/2020" />
                <DateField label="Fecha de vencimiento" value="09/11/2020" />
                <DateField label="Fecha de documento" value="09/11/2020" tone="open" />
                <DateField label="Referencia" tone="open" />
                <DateField label="Número de operación" value="1804406" arrow />
              </RightStack>
              <VisualizarLine $gap={5}>
                <CheckBox $size={12} />
                Visualizar facturas con misma dirección facturación
              </VisualizarLine>
            </HeaderGrid>
            <TableArea>
              <Table>
                {columns.map((c) => (
                  <HeadCell key={c}>{c}</HeadCell>
                ))}
                <BodyCell $tone="pick" $align="center">
                  <CheckBox $live $size={12}><CheckMark c="#222" size={10} /></CheckBox>
                </BodyCell>
                <BodyCell $tone="pick"><ArrowLink />68845</BodyCell>
                <BodyCell $tone="pick">1 de 1</BodyCell>
                <BodyCell $tone="pick">TT</BodyCell>
                <BodyCell $tone="pick">04/09/2020</BodyCell>
                <BodyCell $tone="pick">*</BodyCell>
                <BodyCell $tone="pick">35</BodyCell>
                <BodyCell $tone="pick" $align="flex-end">SOL 340.00</BodyCell>
                <BodyCell $tone="pick" />
                <BodyCell $tone="pick" />
                <BodyCell $tone="pick" />
                <BodyCell $tone="pick" />
                {[0, 1, 2].map((row) =>
                  columns.map((c, i) => (
                    <BodyCell key={`${row}-${c}`} $tone={i === 0 || i === columns.length - 1 ? "free" : "idle"} />
                  )),
                )}
              </Table>
              <TableVertical>
                <VerticalBar $height={65} $width={17}>
                  <ScrollButton $height={15} $muted><Triangle dir="up" /></ScrollButton>
                  <ScrollButton $height={15} $muted><Triangle dir="down" /></ScrollButton>
                </VerticalBar>
              </TableVertical>
            </TableArea>
            <HorizontalBar>
              <SideButton><Triangle dir="left" c="#5c5c5c" /></SideButton>
              <SideThumb><GripDots wide /></SideThumb>
              <SideButton><Triangle dir="right" c="#5c5c5c" /></SideButton>
            </HorizontalBar>
            <LowerArea>
              <CommentsStack>
                <FieldRow $label={126} $value={137}>
                  <FieldLabel>Comentarios</FieldLabel>
                  <FieldValue $tone="note" />
                </FieldRow>
                <FieldRow $label={126} $value={137}>
                  <FieldLabel>Comentarios</FieldLabel>
                  <FieldValue $tone="open" $squeeze={-0.3}>Pagos efectuados - PL20600200233</FieldValue>
                </FieldRow>
              </CommentsStack>
              <RightLower>
                <PayLine>
                  <CheckBox $size={13} />
                  <FieldLabel $faded>Pago a cuenta</FieldLabel>
                  <FieldValue $right $squeeze={-0.3}>0.00</FieldValue>
                </PayLine>
                <Amount label="Importe vencido (ME)" coin />
                <Amount label="Importe vencido (moneda local)" value="SOL 340.00" />
                <Amount label="Saldo pendiente" />
              </RightLower>
            </LowerArea>
            <FootCheck $gap={5}>
              <CheckBox $size={12}><CheckMark c="#a4a4a4" size={10} /></CheckBox>
              <span>Creado por a<u>s</u>istente de pagos</span>
            </FootCheck>
            <ButtonRow>
              <PrimaryButton $lead>OK</PrimaryButton>
              <PrimaryButton>Cancelar</PrimaryButton>
              <MutedButton $first $width={95}>Desmarcar todo</MutedButton>
              <MutedButton $width={95}>Seleccionar todo</MutedButton>
              <MutedButton $width={114}>A<u>ñ</u>adir en serie</MutedButton>
            </ButtonRow>
          </FormBody>
        </FormWindow>

        <RedFrame $x={330} $y={14} $w={821} $h={469} />
        <RedFrame $x={18} $y={227} $w={158} $h={28} />
        <RedFrame $x={66} $y={326} $w={120} $h={28} />
        <StepBadge $x={197} $y={241}>1</StepBadge>
        <StepBadge $x={207} $y={340}>2</StepBadge>
        <StepBadge $x={777} $y={138}>4</StepBadge>
      </Desktop>
      <RedFrame $x={453} $y={51} $w={31} $h={27} />
      <StepBadge $x={501} $y={62}>3</StepBadge>
    </Page>
  )
}
